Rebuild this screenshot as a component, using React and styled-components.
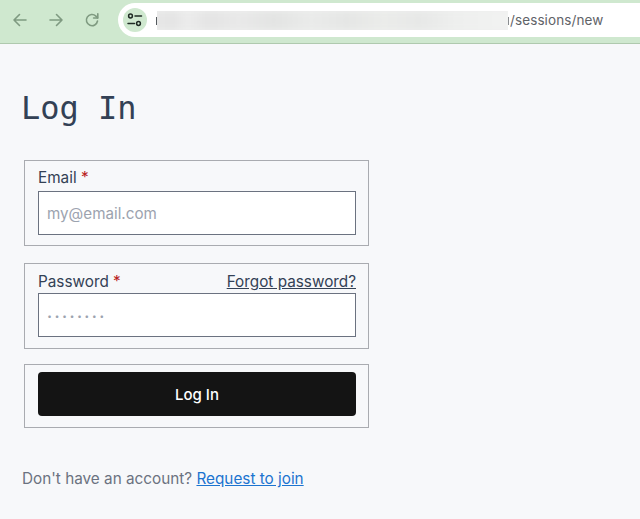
import styled, { createGlobalStyle } from "styled-components";

const GlobalStyle = createGlobalStyle`
  html, body {
    margin: 0;
    background: #f7f8fa;
    overflow: hidden;
  }
  * { box-sizing: border-box; }
`;

const Page = styled.div`
  width: 640px;
  height: 519px;
  overflow: hidden;
  font-family: Inter, "Liberation Sans", sans-serif;
  background: #f7f8fa;
`;

const Toolbar = styled.div`
  height: 44px;
  background: #cfe8cf;
  border-bottom: 1px solid #afc9ae;
  display: flex;
  align-items: flex-start;
  padding: 3px 0 0 11px;
`;

const NavButton = styled.span`
  width: 18px;
  height: 34px;
  margin-right: 18px;
  display: flex;
  align-items: center;
  justify-content: center;
  color: #7f9a81;
`;

const UrlPill = styled.div`
  flex: 1;
  height: 34px;
  margin-left: -1px;
  margin-right: -30px;
  padding-left: 5px;
  display: flex;
  align-items: center;
  background: #fff;
  border-radius: 17px;
`;

const SiteBadge = styled.span`
  width: 24px;
  height: 24px;
  flex: none;
  margin-right: 9px;
  border-radius: 50%;
  background: #cfe8cf;
  display: flex;
  align-items: center;
  justify-content: center;
  color: #1f2a24;
`;

const TextTick = styled.span`
  width: 1px;
  height: 8px;
  flex: none;
  margin-top: 2px;
  background: ${(p) => p.$color};
`;

const BlurClip = styled.span`
  width: 351px;
  height: 19px;
  flex: none;
  overflow: hidden;
  background: #eeefee;
`;

const BlurStrip = styled.span`
  display: block;
  height: 19px;
  margin: 0 -6px;
  filter: blur(3px);
  background: linear-gradient(
    90deg,
    #e8e8e8 0%, #e4e4e4 6%, #ececec 10%, #e4e4e4 16%, #e9e9e9 24%, #e3e4e3 34%,
    #eaebea 44%, #e5e6e5 54%, #ebecea 64%, #e7e8e7 74%, #eeefee 84%, #f2f3f2 100%
  );
`;

const UrlPath = styled.span`
  margin-left: 1px;
  font-size: 13.5px;
  color: #5f6368;
  white-space: nowrap;
  letter-spacing: 0.1px;
`;

const Main = styled.main`
  padding: 44px 0 0 24px;
`;

const Title = styled.h1`
  margin: 0 0 32px -3px;
  font-family: "DejaVu Sans Mono", "Liberation Mono", monospace;
  font-size: 32px;
  font-weight: 400;
  line-height: 40px;
  color: #334155;
`;

const Form = styled.form`
  width: 345px;
  display: flex;
  flex-direction: column;
`;

const Group = styled.fieldset`
  margin: 0 0 ${(p) => p.$gap}px;
  padding: ${(p) => p.$top}px 12px 0 13px;
  height: ${(p) => p.$height}px;
  border: 1px solid #a9abb0;
  min-width: 0;
`;

const LabelRow = styled.div`
  display: flex;
  justify-content: space-between;
  align-items: flex-start;
  height: ${(p) => p.$height}px;
  font-size: 15.3px;
  line-height: 20px;
  color: #334155;
`;

const Label = styled.label`
  color: #334155;
`;

const Star = styled.span`
  color: #b91c1c;
`;

const Forgot = styled.a`
  color: #334155;
  text-decoration: underline;
`;

const Input = styled.input`
  display: block;
  width: 318px;
  height: 44px;
  padding: 0 8px;
  border: 1px solid #6b7280;
  border-radius: 0;
  background: #fff;
  font-family: inherit;
  font-size: 15.2px;
  color: #374151;
  outline: none;

  &::placeholder {
    color: #9ca3af;
    opacity: 1;
  }
`;

const PasswordInput = styled(Input)`
  padding-top: 2px;

  &::placeholder {
    letter-spacing: 2.4px;
    font-weight: 700;
  }
`;

const Submit = styled.button`
  display: block;
  width: 318px;
  height: 44px;
  border: 0;
  border-radius: 4px;
  background: #141414;
  color: #fff;
  font-family: inherit;
  font-size: 15px;
  font-weight: 500;
`;

const Footer = styled.p`
  margin: 41px 0 0 -2px;
  font-size: 15.3px;
  line-height: 20px;
  color: #6b7280;
`;

const JoinLink = styled.a`
  color: #1c74d0;
  text-decoration: underline;
`;

const Arrow = ({ flip }) => (
  <svg width="16" height="16" viewBox="0 0 16 16" fill="none" stroke="currentColor" strokeWidth="1.6" strokeLinecap="round" strokeLinejoin="round" transform={flip ? "scale(-1 1)" : undefined}>
    <path d="M14 8H2M7.5 2.5 2 8l5.5 5.5" />
  </svg>
);

const Reload = () => (
  <svg width="16" height="16" viewBox="0 0 16 16" fill="none" stroke="currentColor" strokeWidth="1.6" strokeLinecap="round" strokeLinejoin="round">
    <path d="M13.5 9a5.6 5.6 0 1 1-1.6-4.9L13.6 6" />
    <path d="M13.8 1.8V6H9.6" />
  </svg>
);

const Tune = () => (
  <svg width="16" height="14" viewBox="0 0 16 14" fill="none" stroke="currentColor" strokeWidth="1.5" strokeLinecap="round">
    <circle cx="3.5" cy="3" r="1.9" />
    <path d="M8 3h6.5" />
    <circle cx="11.5" cy="10.5" r="1.9" />
    <path d="M1 10.5h6.5" />
  </svg>
);

const App = () => (
  <Page>
    <GlobalStyle />
    <Toolbar>
      <NavButton><Arrow /></NavButton>
      <NavButton><Arrow flip /></NavButton>
      <NavButton><Reload /></NavButton>
      <UrlPill>
        <SiteBadge><Tune /></SiteBadge>
        <TextTick $color="#555a5e" />
        <BlurClip><BlurStrip /></BlurClip>
        <TextTick $color="#8a8d90" />
        <UrlPath>/sessions/new</UrlPath>
      </UrlPill>
    </Toolbar>
    <Main>
      <Title>Log In</Title>
      <Form onSubmit={(e) => e.preventDefault()}>
        <Group $top={7} $height={86} $gap={17}>
          <LabelRow $height={23}>
            <Label>Email <Star>*</Star></Label>
          </LabelRow>
          <Input type="email" placeholder="my@email.com" />
        </Group>
        <Group $top={8} $height={86} $gap={15}>
          <LabelRow $height={21}>
            <Label>Password <Star>*</Star></Label>
            <Forgot href="#">Forgot password?</Forgot>
          </LabelRow>
          <PasswordInput type="password" placeholder="········" />
        </Group>
        <Group $top={7} $height={64} $gap={0}>
          <Submit type="submit">Log In</Submit>
        </Group>
      </Form>
      <Footer>
        Don't have an account? <JoinLink href="#">Request to join</JoinLink>
      </Footer>
    </Main>
  </Page>
);

export default App;
